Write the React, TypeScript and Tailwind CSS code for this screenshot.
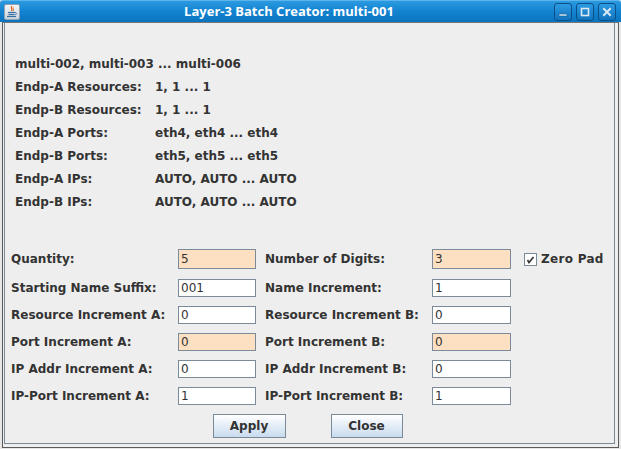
import React from 'react';

const summary: [string, string][] = [
  ['Endp-A Resources:', '1, 1 ... 1'],
  ['Endp-B Resources:', '1, 1 ... 1'],
  ['Endp-A Ports:', 'eth4, eth4 ... eth4'],
  ['Endp-B Ports:', 'eth5, eth5 ... eth5'],
  ['Endp-A IPs:', 'AUTO, AUTO ... AUTO'],
  ['Endp-B IPs:', 'AUTO, AUTO ... AUTO'],
];

interface Row {
  leftLabel: string;
  leftValue: string;
  leftHot?: boolean;
  rightLabel: string;
  rightValue: string;
  rightHot?: boolean;
}

const rows: Row[] = [
  { leftLabel: 'Quantity:', leftValue: '5', leftHot: true, rightLabel: 'Number of Digits:', rightValue: '3', rightHot: true },
  { leftLabel: 'Starting Name Suffix:', leftValue: '001', rightLabel: 'Name Increment:', rightValue: '1' },
  { leftLabel: 'Resource Increment A:', leftValue: '0', rightLabel: 'Resource Increment B:', rightValue: '0' },
  { leftLabel: 'Port Increment A:', leftValue: '0', leftHot: true, rightLabel: 'Port Increment B:', rightValue: '0', rightHot: true },
  { leftLabel: 'IP Addr Increment A:', leftValue: '0', rightLabel: 'IP Addr Increment B:', rightValue: '0' },
  { leftLabel: 'IP-Port Increment A:', leftValue: '1', rightLabel: 'IP-Port Increment B:', rightValue: '1' },
];

const Field = ({ value, hot, width }: { value: string; hot?: boolean; width: string }) => (
  <div
    className={`${width} h-full border border-[#7a8a99] ${hot ? 'bg-[#fddfc1]' : 'bg-white'} flex items-center pl-[2px] font-normal text-[12px] text-[#333333]`}
  >
    {value}
  </div>
);

const JavaIcon = () => (
  <div className="w-[16px] h-[16px] rounded-[2px] bg-gradient-to-b from-[#f4f6f8] to-[#c9d3dd] border border-[#8fa3b5] flex items-center justify-center">
    <svg width="12" height="13" viewBox="0 0 12 13">
      <path d="M6 1 C4 3 7 4 5.5 6" stroke="#e2661b" strokeWidth="1.3" fill="none" />
      <path d="M7.5 2.5 C6.5 4 8 4.5 7 6" stroke="#e2661b" strokeWidth="1" fill="none" />
      <path d="M2 7.5 H9" stroke="#3b6ea5" strokeWidth="1.2" />
      <path d="M2.5 9.5 H8.5" stroke="#3b6ea5" strokeWidth="1.2" />
      <path d="M9 7.5 C11 7.5 11 9.5 9 9.5" stroke="#3b6ea5" strokeWidth="1" fill="none" />
      <path d="M1 11.5 H10" stroke="#3b6ea5" strokeWidth="1.2" />
    </svg>
  </div>
);

const TitleButton = ({ kind }: { kind: 'min' | 'max' | 'close' }) => (
  <div className="w-[18px] h-[18px] rounded-[3px] border border-[#0b4f86] bg-gradient-to-b from-[#2c9be3] to-[#0f74bd] flex items-center justify-center">
    <svg width="10" height="10" viewBox="0 0 10 10">
      {kind === 'min' && <rect x="1" y="7" width="8" height="2" fill="#dbe9f5" stroke="#0b4f86" strokeWidth="0.5" />}
      {kind === 'max' && <rect x="1.5" y="1.5" width="7" height="7" fill="none" stroke="#dbe9f5" strokeWidth="1.6" />}
      {kind === 'close' && (
        <path d="M2 2 L8 8 M8 2 L2 8" stroke="#dbe9f5" strokeWidth="2" strokeLinecap="square" />
      )}
    </svg>
  </div>
);

const App = () => {
  return (
    <div className="w-[621px] h-[449px] flex flex-col bg-[#e6e6e6] font-['DejaVu_Sans',sans-serif] text-[#333333] overflow-hidden">
      <div className="h-[22px] rounded-t-[3px] bg-gradient-to-b from-[#2b9ae0] via-[#1283d1] to-[#0b73be] border-t border-[#5bb4ec] flex items-center px-[4px] relative">
        <JavaIcon />
        <div className="flex-1 text-center text-white font-bold text-[13px] font-['Open_Sans',sans-serif] tracking-[0px] pl-[4px]">
          Layer-3 Batch Creator: multi-001
        </div>
        <div className="flex gap-[4px] pr-[1px]">
          <TitleButton kind="min" />
          <TitleButton kind="max" />
          <TitleButton kind="close" />
        </div>
      </div>
      <div className="flex-1 flex flex-col mx-[2px] mb-[1px] border-x border-b border-[#5a5a5a] border-t border-t-[#777777] bg-[#eeeeee]">
        <div className="flex-1 flex flex-col ml-[1px] mr-[3px] mb-[3px] border-l border-r border-b border-[#7a8a99] font-bold text-[12px]">
          <div className="flex flex-col pl-[10px] pt-[29px]">
            <div className="h-[23px] flex items-center">multi-002, multi-003 ... multi-006</div>
            {summary.map(([label, value]) => (
              <div key={label} className="h-[23px] flex items-center">
                <span className="w-[140px]">{label}</span>
                <span>{value}</span>
              </div>
            ))}
          </div>
          <div className="flex flex-col pl-[6px] mt-[36px] gap-[9px]">
            {rows.map((r, i) => (
              <div key={r.leftLabel} className={`flex items-stretch ${i === 0 ? 'h-[20px] mb-[1px]' : 'h-[18px]'}`}>
                <div className="w-[167px] flex items-center">{r.leftLabel}</div>
                <Field value={r.leftValue} hot={r.leftHot} width="w-[78px]" />
                <div className="w-[9px]" />
                <div className="w-[167px] flex items-center">{r.rightLabel}</div>
                <Field value={r.rightValue} hot={r.rightHot} width="w-[79px]" />
                {i === 0 && (
                  <div className="flex items-center ml-[13px] gap-[4px] tracking-[0.3px]">
                    <div className="w-[13px] h-[13px] border border-[#7a8a99] bg-white flex items-center justify-center">
                      <svg width="9" height="9" viewBox="0 0 9 9">
                        <path d="M1.5 5 L3 7.5 L7.5 2" stroke="#333333" strokeWidth="1.6" fill="none" />
                      </svg>
                    </div>
                    <span>Zero Pad</span>
                  </div>
                )}
              </div>
            ))}
          </div>
          <div className="flex justify-center gap-[45px] mt-[9px] pr-[4px]">
            <button className="w-[73px] h-[24px] border border-[#7a8a99] bg-gradient-to-b from-white to-[#c8dbee] font-bold text-[12px] text-[#333333]">
              Apply
            </button>
            <button className="w-[72px] h-[24px] border border-[#7a8a99] bg-gradient-to-b from-white to-[#c8dbee] font-bold text-[12px] text-[#333333]">
              Close
            </button>
          </div>
        </div>
      </div>
    </div>
  );
};

export default App;
